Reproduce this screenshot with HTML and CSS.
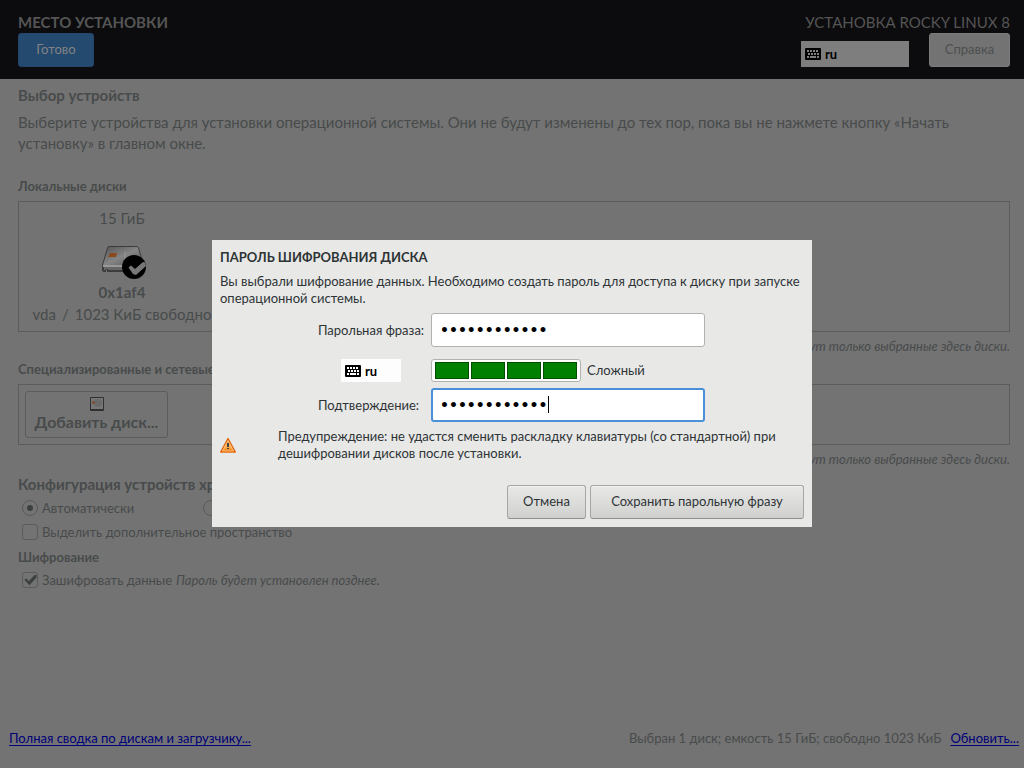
FILE: index.html
```html
<!DOCTYPE html>
<html lang="ru">
<head>
<meta charset="utf-8">
<title>Место установки</title>
<link rel="stylesheet" href="styles.css">
</head>
<body>
<svg class="sprite" aria-hidden="true">
  <symbol id="keyboard" viewBox="0 0 16 12">
    <rect width="16" height="12" rx="1"/>
    <path class="keys" d="M2 2h2v2H2zM5 2h2v2H5zM8 2h2v2H8zM11 2h2v2h-2zM3 5h2v2H3zM6 5h2v2H6zM9 5h2v2H9zM12 5h2v2h-2zM2 8h2v2H2zM5 8h6v2H5zM12 8h2v2h-2z"/>
  </symbol>
</svg>
<div class="page">
  <header class="header">
    <div class="header-left">
      <h1 class="title">МЕСТО УСТАНОВКИ</h1>
      <button class="button done" type="button">Готово</button>
    </div>
    <div class="header-right">
      <div class="product">УСТАНОВКА ROCKY LINUX 8</div>
      <div class="header-tools">
        <button class="layout layout-dim" type="button"><svg class="kb-icon" viewBox="0 0 16 12"><use href="#keyboard"/></svg>ru</button>
        <button class="button help" type="button">Справка</button>
      </div>
    </div>
  </header>
  <main class="main">
    <h2 class="section">Выбор устройств</h2>
    <p class="intro">Выберите устройства для установки операционной системы. Они не будут изменены до тех пор, пока вы не нажмете кнопку «Начать установку» в главном окне.</p>
    <h3 class="subhead local">Локальные диски</h3>
    <div class="disks">
      <div class="disk">
        <div>15 ГиБ</div>
        <svg class="disk-icon" viewBox="0 0 48 36">
          <defs><linearGradient id="metal" x2="1" y2="1"><stop offset="0" stop-color="#555"/><stop offset=".5" stop-color="#858585"/><stop offset="1" stop-color="#555"/></linearGradient></defs>
          <path d="M9 1h27q2 0 3 2l5 17v5q0 2-2 2H7v-2H6v2H4q-2 0-2-2v-5L7 3q1-2 2-2z" fill="#3c3c3c"/>
          <path d="M9 2h27q2 0 2 1l5 17H3L8 3z" fill="url(#metal)"/>
          <path d="M3 20h40v2H3z" fill="#999"/><path d="M4 22h38v3H8v-1H6v1H4z" fill="#666"/>
          <path d="M10 8h7l-1 4H8z" fill="#8b4a1d"/><path d="M25 7v10" stroke="#999"/>
          <circle cx="34" cy="22" r="12"/>
          <path d="M28.500 22.500 31 20.500l4 3.500 8-7 2 .5 1 3.500-10 9-3-1z" fill="#777"/>
        </svg>
        <strong>0x1af4</strong>
        <div class="disk-free"><span>vda</span><span>/</span><span>1023 КиБ свободно</span></div>
      </div>
    </div>
    <p class="note">Затронуты будут только выбранные здесь диски.</p>
    <h3 class="subhead">Специализированные и сетевые диски</h3>
    <div class="network">
      <button class="add" type="button">
        <svg class="add-icon" viewBox="0 0 14 14"><rect width="14" height="14" rx="1" fill="#303030"/><rect x="1" y="1" width="12" height="11" fill="#777"/><circle cx="8" cy="6" r="4" fill="#6a6a6a"/><path d="M2 4h3v3H2z" fill="#7d5340"/></svg>
        Добавить диск...
      </button>
    </div>
    <p class="note">Затронуты будут только выбранные здесь диски.</p>
    <h2 class="section config">Конфигурация устройств хранения</h2>
    <div class="options">
      <div class="radios">
        <label class="option"><input class="radio" type="radio" name="config" checked>Автоматически</label>
        <label class="option"><input class="radio" type="radio" name="config">По-своему</label>
      </div>
      <label class="option"><input class="check" type="checkbox">Выделить дополнительное пространство</label>
    </div>
    <h3 class="subhead crypt">Шифрование</h3>
    <label class="option encrypt"><input class="check" type="checkbox" checked>Зашифровать данные <em>Пароль будет установлен позднее.</em></label>
  </main>
  <footer class="footer">
    <a class="link" href="#summary">Полная сводка по дискам и загрузчику...</a>
    <span class="status">Выбран 1 диск; емкость 15 ГиБ; свободно 1023 КиБ</span>
    <a class="link" href="#refresh">Обновить...</a>
  </footer>
</div>
<div class="overlay">
  <form class="dialog" role="dialog" aria-labelledby="dialog-title">
    <h2 class="dialog-title" id="dialog-title">ПАРОЛЬ ШИФРОВАНИЯ ДИСКА</h2>
    <p class="dialog-text">Вы выбрали шифрование данных. Необходимо создать пароль для доступа к диску при запуске операционной системы.</p>
    <div class="fields">
      <label for="phrase">Парольная фраза:</label>
      <input class="entry" id="phrase" type="password" value="rockylinux88">
      <button class="layout layout-small" type="button"><svg class="kb-icon" viewBox="0 0 16 12"><use href="#keyboard"/></svg>ru</button>
      <div class="strength">
        <div class="meter"><i></i><i></i><i></i><i></i></div>
        <span>Сложный</span>
      </div>
      <label for="confirm">Подтверждение:</label>
      <div class="confirm">
        <input class="entry entry-active" id="confirm" type="password" value="rockylinux88">
        <span class="caret"></span>
      </div>
    </div>
    <div class="warning">
      <svg class="warning-icon" viewBox="0 0 16 16">
        <defs><linearGradient id="amber" x2="0" y2="1"><stop offset="0" stop-color="#f58220"/><stop offset=".6" stop-color="#fbb45c"/><stop offset="1" stop-color="#f57900"/></linearGradient></defs>
        <path d="M8 1.500 15.300 15H.7z" fill="url(#amber)" stroke="#e0660a" stroke-width="1.400" stroke-linejoin="round"/>
        <path d="M8 3.500 13.500 14h-11z" fill="none" stroke="#fcc58a" stroke-width=".8"/>
        <path d="M7 6h2v4H7zM7 11h2v1H7z" fill="#444"/>
      </svg>
      <p class="warning-text">Предупреждение: не удастся сменить раскладку клавиатуры (со стандартной) при дешифровании дисков после установки.</p>
    </div>
    <div class="actions">
      <button class="button cancel" type="button">Отмена</button>
      <button class="button save" type="button">Сохранить парольную фразу</button>
    </div>
  </form>
</div>
</body>
</html>
```
FILE: styles.css
```css
* { box-sizing: border-box; }
body {
  margin: 0;
  background: #737373;
  color: #484b4b;
  font: 13px/18px Lato, "Noto Sans", sans-serif;
}
h1, h2, h3, p { margin: 0; }
button, input { font: inherit; }
.sprite { position: absolute; width: 0; height: 0; }
.keys { fill: var(--keys, #fff); }
.page { display: flex; flex-direction: column; min-height: 100vh; }

.header {
  display: flex;
  justify-content: space-between;
  padding: 12px 14px 12px 18px;
  background: #0c0c0e;
  color: #555;
  font-size: 15px;
  line-height: 20px;
}
.title { margin-bottom: 1px; font-size: 15px; line-height: 20px; }
.product { margin-bottom: 1px; text-align: right; }
.button {
  height: 34px;
  padding: 0 14px 2px;
  border: 1px solid #a6a6a2;
  border-bottom-color: #8e8e8a;
  border-radius: 3px;
  background: linear-gradient(#e8e8e7, #d0d0ce);
  color: #2e3436;
  font-size: 13px;
  line-height: 18px;
  box-shadow: inset 0 1px #f4f4f4;
}
.done { min-width: 76px; background: #254a70; border-color: #23466b; color: #828282; box-shadow: none; }
.header-tools { display: flex; align-items: flex-end; justify-content: space-between; gap: 20px; }
.help { min-width: 81px; background: #737373; border-color: #7b7b7b; color: #4c4f4f; box-shadow: none; }
.layout {
  display: flex;
  align-items: center;
  gap: 4px;
  padding: 0 4px;
  border: 0;
  background: #fdfdfd;
  color: #000;
  font-size: 13px;
  line-height: 18px;
  font-weight: bold;
}
.kb-icon { width: 16px; height: 12px; }
.layout-dim { --keys: #7e7e7e; width: 108px; height: 26px; background: #7e7e7e; }
.layout-small { width: 60px; height: 23px; margin-left: 23px; }

.main { flex: 1; padding: 6px 14px 0 18px; }
.section { font-size: 15px; line-height: 20px; }
.intro { margin-top: 7px; font-size: 15px; line-height: 21px; }
.subhead { margin-top: 5px; font-size: 13px; line-height: 18px; }
.local { margin-top: 23px; }
.disks { margin-top: 6px; padding: 5px 11px 6px; border: 1px solid #5c5c5c; }
.disk {
  display: flex;
  flex-direction: column;
  align-items: center;
  width: 184px;
  font-size: 15px;
  line-height: 22px;
}
.disk-icon { width: 48px; height: 36px; margin: 16px 0 0 4px; }
.disk-free { display: flex; gap: 6px; white-space: nowrap; }
.note { margin-top: 5px; font-style: italic; text-align: right; }
.network { margin-top: 6px; padding: 6px; border: 1px solid #5c5c5c; }
.add {
  display: flex;
  flex-direction: column;
  align-items: center;
  width: 143px;
  height: 47px;
  padding: 5px 0 0;
  border: 1px solid #5c5c5c;
  border-radius: 3px;
  background: none;
  color: inherit;
  font-size: 16px;
  font-weight: bold;
  line-height: 22px;
}
.add-icon { width: 14px; height: 14px; }
.config { margin-top: 6px; }
.options { display: grid; gap: 8px; margin-top: 6px; }
.radios { display: grid; grid-template-columns: 181px 1fr; }
.option { display: flex; align-items: center; gap: 4px; height: 16px; padding-left: 4px; }
.radio, .check {
  appearance: none;
  display: grid;
  place-items: center;
  width: 16px;
  height: 16px;
  margin: 0;
  border: 1px solid #5a5a5a;
  border-radius: 3px;
}
.radio { border-radius: 50%; }
.radio:checked::before { content: ""; width: 6px; height: 6px; border-radius: 50%; background: #3d4040; }
.check:checked::before {
  content: "";
  width: 13px;
  height: 12px;
  background: #3d4040;
  clip-path: polygon(6% 48%, 22% 38%, 42% 58%, 85% 8%, 100% 8%, 100% 30%, 46% 94%);
}
.crypt { margin-top: 8px; }
.encrypt { margin-top: 6px; }
.footer { display: flex; gap: 9px; padding: 0 5px 21px 9px; }
.status { margin-left: auto; }
.link { color: #000078; text-underline-offset: 2px; }

.overlay { position: fixed; inset: 0; display: grid; place-items: center; padding-bottom: 1px; }
.dialog {
  width: 600px;
  max-width: 100%;
  padding: 8px;
  background: #e8e8e7;
  color: #2e3436;
  line-height: 17px;
}
.dialog-title { font-size: 13px; line-height: 18px; }
.dialog-text { margin-top: 7px; }
.fields {
  display: grid;
  grid-template-columns: 107px 274px;
  justify-content: center;
  align-items: center;
  gap: 6px;
  margin-top: 6px;
  padding-right: 1px;
  white-space: nowrap;
}
.entry {
  display: block;
  width: 100%;
  height: 34px;
  padding: 0 8px;
  border: 1px solid #b2b2ae;
  border-radius: 3px;
  background: #fff;
  color: #000;
  font: bold 14px "DejaVu Sans", sans-serif;
}
.entry-active { padding: 0 7px; border: 2px solid #4a90d9; caret-color: transparent; }
.layout-small, .strength { margin-top: 6px; }
.strength { display: flex; align-items: center; gap: 6px; }
.meter {
  display: grid;
  grid-template-columns: repeat(4, 1fr);
  gap: 2px;
  width: 150px;
  height: 23px;
  padding: 2px 3px;
  border: 1px solid #b2b2ae;
  border-radius: 3px;
  background: #fff;
}
.meter i { border: 1px solid #004d00; background: #008000; }
.confirm { position: relative; }
.caret { position: absolute; top: 8px; left: 117px; width: 1px; height: 17px; background: #000; }
.warning { display: flex; align-items: center; gap: 42px; margin-top: 6px; }
.warning-icon { flex: none; width: 16px; height: 16px; }
.actions { display: flex; justify-content: flex-end; gap: 4px; margin-top: 23px; }
.cancel { min-width: 79px; }
.save { min-width: 214px; }
```
